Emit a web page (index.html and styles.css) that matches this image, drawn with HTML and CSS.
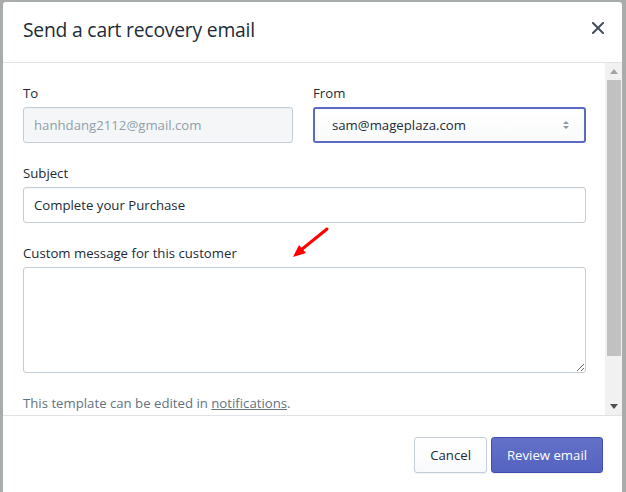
FILE: index.html
```html
<!DOCTYPE html>
<html>
<head>
<meta charset="utf-8">
<link rel="stylesheet" href="styles.css">
</head>
<body>
<div class="backdrop">
  <div class="modal">
    <div class="modal-header">
      <h2 class="modal-title">Send a cart recovery email</h2>
      <button class="close-btn" aria-label="Close">
        <svg width="12" height="12" viewBox="0 0 12 12"><path d="M1 1L11 11M11 1L1 11" stroke="#454f5b" stroke-width="2" stroke-linecap="square"/></svg>
      </button>
    </div>
    <div class="modal-body">
      <div class="body-content">
        <div class="row-2">
          <div class="field">
            <label class="label">To</label>
            <div class="input disabled">hanhdang2112@gmail.com</div>
          </div>
          <div class="field">
            <label class="label">From</label>
            <div class="input select focused">
              <span>sam@mageplaza.com</span>
              <svg class="caret" width="8" height="12" viewBox="0 0 8 12"><path d="M4 2L7 5H1Z M4 10L1 7H7Z" fill="#8a96a3"/></svg>
            </div>
          </div>
        </div>
        <div class="field">
          <label class="label">Subject</label>
          <div class="input">Complete your Purchase</div>
        </div>
        <div class="field">
          <label class="label">Custom message for this customer</label>
          <textarea class="textarea"></textarea>
        </div>
        <p class="help">This template can be edited in <a class="link">notifications</a>.</p>
      </div>
      <div class="scrollbar">
        <div class="sb-btn"><svg width="8" height="5" viewBox="0 0 8 5"><path d="M0 5L4 0L8 5Z" fill="#a3a3a3"/></svg></div>
        <div class="sb-track"><div class="sb-thumb"></div></div>
        <div class="sb-btn"><svg width="8" height="5" viewBox="0 0 8 5"><path d="M0 0L8 0L4 5Z" fill="#505050"/></svg></div>
      </div>
    </div>
    <div class="modal-footer">
      <button class="btn">Cancel</button>
      <button class="btn primary">Review email</button>
    </div>
  </div>
  <svg class="annot" width="44" height="38" viewBox="0 0 44 38">
    <path d="M38 3L12 24" stroke="#ff0000" stroke-width="3" stroke-linecap="round"/>
    <path d="M4 31L10 19L17 27Z" fill="#ff0000"/>
  </svg>
</div>
</body>
</html>
```

FILE: styles.css
```css
* { box-sizing: border-box; }
html, body { margin: 0; padding: 0; }
body {
  width: 626px;
  height: 492px;
  overflow: hidden;
  font-family: "Open Sans", "Noto Sans", sans-serif;
  color: #212b36;
}
.backdrop {
  position: relative;
  width: 626px;
  height: 492px;
  background: #a8acab;
  padding: 2px 4px 0 3px;
}
.modal {
  width: 619px;
  height: 500px;
  background: #fff;
  display: flex;
  flex-direction: column;
  border-radius: 3px 3px 0 0;
}
.modal-header {
  height: 61px;
  flex: none;
  display: flex;
  align-items: center;
  justify-content: space-between;
  padding: 0 18px 4px 20px;
  border-bottom: 1px solid #dfe3e8;
}
.modal-title {
  margin: 0;
  font-size: 19.3px;
  font-weight: 400;
  line-height: 24px;
  letter-spacing: -0.2px;
  color: #212b36;
}
.close-btn {
  border: 0;
  background: none;
  padding: 0;
  width: 12px;
  height: 12px;
  display: flex;
  margin-top: -4px;
}
.modal-body {
  height: 353px;
  flex: none;
  display: flex;
  border-bottom: 1px solid #dfe3e8;
  overflow: hidden;
}
.body-content {
  flex: 1;
  padding: 20px 19px 0 20px;
}
.row-2 {
  display: grid;
  grid-template-columns: 270px 273px;
  gap: 20px;
}
.field { margin-bottom: 20px; }
.label {
  display: block;
  font-size: 13.2px;
  line-height: 20px;
  margin-bottom: 4px;
  color: #212b36;
}
.input {
  height: 36px;
  border: 1px solid #c4cdd5;
  border-radius: 3px;
  padding: 0 10px;
  font-size: 13.2px;
  display: flex;
  align-items: center;
  color: #212b36;
  background: #fff;
  box-shadow: inset 0 1px 0 0 rgba(99,115,129,0.05);
}
.input.disabled {
  background: #f4f6f8;
  color: #919eab;
  border-color: #c4cdd5;
}
.input.select {
  justify-content: space-between;
  padding: 0 14px 0 17px;
  background: linear-gradient(#fff, #f9fafb);
}
.input.focused {
  border: 2px solid #5c6ac4;
}
.caret { flex: none; }
.textarea {
  display: block;
  width: 100%;
  height: 106px;
  border: 1px solid #c4cdd5;
  border-radius: 3px;
  font-family: inherit;
  font-size: 13.2px;
  resize: vertical;
  margin: 0;
}
.help {
  margin: 0;
  margin-top: 1px;
  font-size: 13.2px;
  line-height: 20px;
  color: #637381;
}
.link {
  color: #637381;
  text-decoration: underline;
}
.scrollbar {
  width: 17px;
  flex: none;
  background: #f1f1f1;
  display: flex;
  flex-direction: column;
}
.sb-btn {
  height: 17px;
  flex: none;
  display: flex;
  align-items: center;
  justify-content: center;
}
.sb-track {
  flex: 1;
  padding: 0 1px 0 2px;
}
.sb-thumb {
  height: 276px;
  background: #c1c1c1;
}
.modal-footer {
  flex: none;
  display: flex;
  justify-content: flex-end;
  gap: 4px;
  padding: 21px 19px 0 0;
}
.btn {
  height: 36px;
  padding: 0 15px;
  border: 1px solid #c4cdd5;
  border-radius: 3px;
  background: linear-gradient(#fff, #f9fafb);
  font-family: inherit;
  font-size: 13.2px;
  color: #212b36;
  white-space: nowrap;
  box-shadow: 0 1px 0 0 rgba(22,29,37,0.05);
}
.btn.primary {
  background: linear-gradient(#6371c7, #5563c1);
  border-color: #3f4eae;
  color: #fff;
  padding: 0 14px;
  min-width: 112px;
}
.annot {
  position: absolute;
  left: 289px;
  top: 226px;
}
```
